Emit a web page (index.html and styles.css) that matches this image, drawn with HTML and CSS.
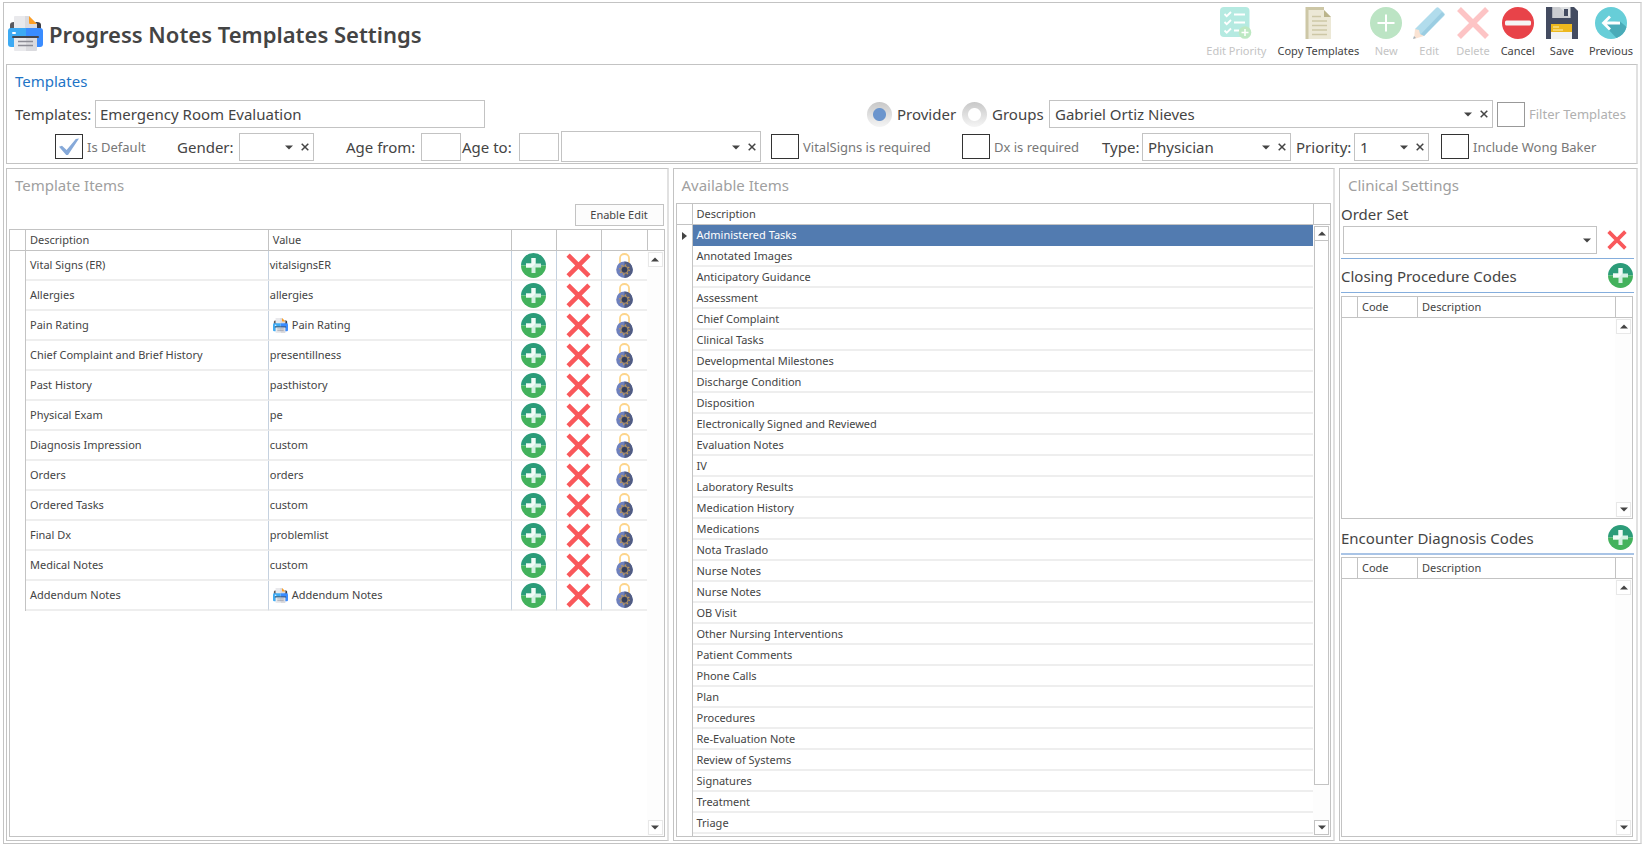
FILE: index.html
```html
<!DOCTYPE html>
<html lang="en">
<head>
<meta charset="utf-8">
<title>Progress Notes Templates Settings</title>
<link rel="stylesheet" href="styles.css">
</head>
<body>
<svg class="sprite" aria-hidden="true">
  <symbol id="printer" viewBox="0 0 35 35">
    <path d="M2 14V9q0-3 4-3h2v8z" fill="#59595f"/><path d="M27 6h2q4 0 4 3v5h-6z" fill="#3d3d45"/>
    <path d="M6 1q0-1 1-1h14v13H6z" fill="#e9e9ec"/><path d="M17 0h4l8 8v5H17z" fill="#dadade"/>
    <path d="M21 0l8 8h-7q-1 0-1-1z" fill="#ff9f24"/>
    <path d="M3 12h15v19H3q-3 0-3-3V15q0-3 3-3z" fill="#3daaf3"/><path d="M18 12h14q3 0 3 3v13q0 3-3 3H18z" fill="#3a8cff"/>
    <rect x="4" y="16" width="4" height="2" rx="1" fill="#fff"/>
    <rect x="4" y="20" width="27" height="2" rx="1" fill="#44454d"/>
    <path d="M6 22h12v13H7q-1 0-1-1z" fill="#e9e9ec"/><path d="M18 22h11v12q0 1-1 1H18z" fill="#dadade"/>
    <path d="M10 25.500h15M10 29.500h15" stroke="#8b8b94" stroke-width="1.400"/>
  </symbol>
  <symbol id="plus" viewBox="0 0 25 25">
    <path d="M0 12.500a12.500 12.500 0 0 1 25 0z" fill="#2c9c79"/><path d="M0 12.500a12.500 12.500 0 0 0 25 0z" fill="#43b25c"/>
    <path d="M10.500 5h4v5.500H20v4h-5.500V20h-4v-5.500H5v-4h5.500z" fill="#d4f0e3"/><path d="M10.500 5h4v5.500l-4 4H5v-4h5.500z" fill="#f2fbf7"/>
  </symbol>
  <symbol id="cross" viewBox="0 0 24 24">
    <path d="M2 2l20 20M22 2L2 22" stroke="#f9585b" stroke-width="4.400"/>
  </symbol>
  <symbol id="lock" viewBox="0 0 17 25">
    <path d="M4 11V5.200a4.500 4.200 0 0 1 9 0V11" fill="none" stroke="#fdd58b" stroke-width="1.800"/>
    <circle cx="8.500" cy="16.700" r="8.300" fill="#6e80bd"/><path d="M8.500 8.400a8.300 8.300 0 0 1 0 16.600z" fill="#515c82"/>
    <circle cx="8.500" cy="16.700" r="4.700" fill="none" stroke="#c79a52" stroke-width="1.600" stroke-dasharray="1.200 2.490"/>
    <circle cx="8.500" cy="16.700" r="3.700" fill="#5a6282" stroke="#c79a52" stroke-width=".8"/><circle cx="8.500" cy="16.700" r="2.600" fill="#353e59"/>
  </symbol>
  <symbol id="caret" viewBox="0 0 8 5"><path d="M0 .5h8L4 4.500z" fill="#444"/></symbol>
  <symbol id="caret-up" viewBox="0 0 8 5"><path d="M0 4.500h8L4 .5z" fill="#444"/></symbol>
  <symbol id="clear" viewBox="0 0 8 8"><path d="M.7.700l6.600 6.600M7.300.700L.7 7.300" stroke="#444" stroke-width="1.500"/></symbol>
</svg>

<div class="window">
  <header class="header">
    <h1 class="title"><svg class="title-icon"><use href="#printer"/></svg>Progress Notes Templates Settings</h1>
    <nav class="toolbar">
      <button class="tool" disabled><svg viewBox="0 0 32 32">
        <rect width="29.500" height="30" rx="4" fill="#b5eae1"/>
        <path d="M4.500 7l2.200 2.200L11 5M4.500 15l2.200 2.200L11 13M4.500 23.500l2.200 2.200L11 21.500M14 7.500h11M14 15.500h11M14 23.500h5" fill="none" stroke="#fff" stroke-width="1.800"/>
        <circle cx="25" cy="25.500" r="6.300" fill="#bde8c2"/><path d="M25 22v7M21.500 25.500h7" stroke="#fff" stroke-width="1.500"/></svg>Edit Priority</button>
      <button class="tool"><svg viewBox="0 0 32 32">
        <path d="M3.500 0H22v5H8v27H3.500z" fill="#cdc7a6"/><path d="M6.500 3H22l7 7v22H6.500z" fill="#ece8d6"/><path d="M22 3l7 7h-7z" fill="#bbb48b"/>
        <path d="M10 9.500h9M10 14h15M10 18.500h15M10 23h15M10 27.500h15" stroke="#cdc7a6" stroke-width="1.500"/></svg>Copy Templates</button>
      <button class="tool" disabled><svg viewBox="0 0 32 32"><circle cx="16" cy="16" r="16" fill="#bce4c4"/><path d="M16 7.500v17M7.500 16h17" stroke="#fff" stroke-width="2"/></svg>New</button>
      <button class="tool" disabled><svg viewBox="0 0 32 32">
        <path d="M2 22L23 1q1.500-1.500 3 0l5 5q1.500 1.500 0 3L11 29l-4-1-4-4z" fill="#b1dcec"/><path d="M7 28L29 5l2.500 2.500L11 29z" fill="#9bcde2"/>
        <path d="M2 22l4 1 1 4 4 2-10 3z" fill="#fae3d3"/><path d="M1 29l2 2-3 1z" fill="#a7b2ba"/></svg>Edit</button>
      <button class="tool" disabled><svg viewBox="0 0 32 32"><path d="M2 2l28 28M30 2L2 30" stroke="#fdc4c5" stroke-width="5.500"/></svg>Delete</button>
      <button class="tool"><svg viewBox="0 0 32 32"><circle cx="16" cy="16" r="16" fill="#e84349"/><rect x="3" y="13.500" width="26" height="5" rx="1.500" fill="#f5f5f5"/></svg>Cancel</button>
      <button class="tool"><svg viewBox="0 0 32 32">
        <path d="M0 0h28l4 4v28H0z" fill="#434b60"/><path d="M6.500 0h18v11h-18z" fill="#e0e2e4"/><path d="M6.500 0h7l11 11h-18z" fill="#cbcdd1"/><rect x="18" y="2" width="4" height="7" fill="#434b60"/>
        <path d="M5 17h21v8H5z" fill="#edb81e"/><path d="M5 25h21v7H5z" fill="#f2f2f2"/><path d="M7 20h6M7 23h10" stroke="#fff1b5"/></svg>Save</button>
      <button class="tool"><svg viewBox="0 0 32 32"><circle cx="16" cy="16" r="16" fill="#67ced8"/><path d="M8 17l13.500 14A16 16 0 0 0 31.500 20l-7-6z" fill="#4aabb8"/>
        <path d="M25 16H9M15 9.500L8.500 16l6.500 6.500" fill="none" stroke="#fff" stroke-width="2.800"/></svg>Previous</button>
    </nav>
  </header>

  <section class="panel form">
    <h2 class="panel-title active">Templates</h2>
    <div class="row">
      <label class="label w-templates" for="tpl">Templates:</label>
      <input class="box text-name" id="tpl" type="text" value="Emergency Room Evaluation">
      <label class="radio push"><input type="radio" name="owner" checked>Provider</label>
      <label class="radio"><input type="radio" name="owner">Groups</label>
      <span class="box combo provider"><select aria-label="Provider"><option>Gabriel Ortiz Nieves</option></select><svg class="caret"><use href="#caret"/></svg><button class="clear" aria-label="Clear provider"><svg><use href="#clear"/></svg></button></span>
      <label class="check off w-filter"><input type="checkbox" disabled>Filter Templates</label>
    </div>
    <div class="row second">
      <label class="check w-default"><input type="checkbox" checked>Is Default</label>
      <label class="label w-gender" for="gender">Gender:</label>
      <span class="box combo short"><select id="gender"><option></option></select><svg class="caret"><use href="#caret"/></svg><button class="clear" aria-label="Clear gender"><svg><use href="#clear"/></svg></button></span>
      <label class="label w-from" for="from">Age from:</label>
      <input class="box age" id="from" type="text">
      <label class="label w-to" for="to">Age to:</label>
      <input class="box age" id="to" type="text">
      <span class="box combo unit"><select aria-label="Age unit"><option></option></select><svg class="caret"><use href="#caret"/></svg><button class="clear" aria-label="Clear age unit"><svg><use href="#clear"/></svg></button></span>
      <label class="check w-vital"><input type="checkbox">VitalSigns is required</label>
      <label class="check w-dx"><input type="checkbox">Dx is required</label>
      <label class="label w-type" for="type">Type:</label>
      <span class="box combo type"><select id="type"><option>Physician</option></select><svg class="caret"><use href="#caret"/></svg><button class="clear" aria-label="Clear type"><svg><use href="#clear"/></svg></button></span>
      <label class="label w-priority" for="priority">Priority:</label>
      <span class="box combo short"><select id="priority"><option>1</option></select><svg class="caret"><use href="#caret"/></svg><button class="clear" aria-label="Clear priority"><svg><use href="#clear"/></svg></button></span>
      <label class="check w-wong"><input type="checkbox">Include Wong Baker</label>
    </div>
  </section>

  <main class="columns">
    <section class="panel wide">
      <h2 class="panel-title">Template Items</h2>
      <button class="enable">Enable Edit</button>
      <div class="grid">
        <div class="view">
          <table class="table items">
            <colgroup><col class="c-mark"><col><col><col class="c-act"><col class="c-act"><col class="c-act"></colgroup>
            <thead><tr><th></th><th>Description</th><th>Value</th><th></th><th></th><th></th></tr></thead>
            <tbody id="items"></tbody>
          </table>
        </div>
        <div class="side"><div class="side-head"></div><div class="scroll"><button class="arrow" aria-label="Scroll up"><svg><use href="#caret-up"/></svg></button><button class="arrow" aria-label="Scroll down"><svg><use href="#caret"/></svg></button></div></div>
      </div>
    </section>

    <section class="panel wide">
      <h2 class="panel-title">Available Items</h2>
      <div class="grid">
        <div class="view">
          <table class="table available">
            <colgroup><col class="c-mark"><col></colgroup>
            <thead><tr><th></th><th>Description</th></tr></thead>
            <tbody id="available"></tbody>
          </table>
        </div>
        <div class="side"><div class="side-head"></div><div class="scroll strong"><button class="arrow" aria-label="Scroll up"><svg><use href="#caret-up"/></svg></button><div class="track"><div class="thumb"></div></div><button class="arrow" aria-label="Scroll down"><svg><use href="#caret"/></svg></button></div></div>
      </div>
    </section>

    <section class="panel clinical">
      <h2 class="panel-title">Clinical Settings</h2>
      <label class="sub" for="order">Order Set</label>
      <div class="order">
        <span class="box combo plain"><select id="order"><option></option></select><svg class="caret"><use href="#caret"/></svg></span>
        <button class="icon" aria-label="Clear order set"><svg class="ico-x small"><use href="#cross"/></svg></button>
      </div>
      <div class="bar ruled"><h3 class="sub">Closing Procedure Codes</h3><button class="icon" aria-label="Add procedure code"><svg class="ico-plus"><use href="#plus"/></svg></button></div>
      <div class="grid codes closing">
        <div class="view"><table class="table"><colgroup><col class="c-mark"><col class="c-code"><col></colgroup><thead><tr><th></th><th>Code</th><th>Description</th></tr></thead></table></div>
        <div class="side"><div class="side-head"></div><div class="scroll"><button class="arrow" aria-label="Scroll up"><svg><use href="#caret-up"/></svg></button><button class="arrow" aria-label="Scroll down"><svg><use href="#caret"/></svg></button></div></div>
      </div>
      <div class="bar"><h3 class="sub">Encounter Diagnosis Codes</h3><button class="icon" aria-label="Add diagnosis code"><svg class="ico-plus"><use href="#plus"/></svg></button></div>
      <div class="grid codes encounter">
        <div class="view"><table class="table"><colgroup><col class="c-mark"><col class="c-code"><col></colgroup><thead><tr><th></th><th>Code</th><th>Description</th></tr></thead></table></div>
        <div class="side"><div class="side-head"></div><div class="scroll"><button class="arrow" aria-label="Scroll up"><svg><use href="#caret-up"/></svg></button><button class="arrow" aria-label="Scroll down"><svg><use href="#caret"/></svg></button></div></div>
      </div>
    </section>
  </main>
</div>
<script src="app.js"></script>
</body>
</html>
```
FILE: styles.css
```css
* { box-sizing: border-box; }
body { margin: 0; padding: 2px 4px 5px 3px; background: #fff; color: #444; font: 15px/20px "Segoe UI", "Noto Sans", "Open Sans", sans-serif; }
h1, h2, h3 { margin: 0; font-weight: 400; }
button, input, select { font: inherit; color: inherit; }
button { background: none; border: 0; padding: 0; }
svg { display: block; flex: none; }
.sprite { position: absolute; width: 0; height: 0; }

.window { display: flex; flex-direction: column; height: calc(100vh - 7px); min-height: 600px; border: 1px solid #c3c3c3; border-right: 2px solid #e1e1e1; padding: 0 2px 2px; }

.header { display: flex; justify-content: space-between; height: 61px; flex: none; }
.title { display: flex; align-items: center; gap: 6px; padding-left: 2px; font-size: 22px; line-height: 32px; font-weight: 600; }
.title-icon { width: 35px; height: 35px; }
.toolbar { display: flex; align-items: flex-start; gap: 11px; padding: 4px 5px 0 0; }
.tool { display: flex; flex-direction: column; align-items: center; gap: 3px; min-width: 32px; font-size: 11px; line-height: 18px; white-space: nowrap; }
.tool svg { width: 32px; height: 32px; }
.tool:disabled { color: #c4c4c4; }

.panel { border: 1px solid #c3c3c3; border-right: 2px solid #e1e1e1; padding: 6px 2px 3px; }
.panel-title { padding: 0 6px; font-size: 15px; line-height: 20px; color: #a0a0a0; }
.panel-title.active { color: #1e74c6; }

.form { flex: none; height: 100px; padding-bottom: 0; }
.row { display: flex; align-items: center; height: 28px; padding: 0 7px 0 6px; margin-top: 9px; white-space: nowrap; }
.second { height: 31px; margin-top: 3px; padding-left: 46px; }
.label { flex: none; }
.box { border: 1px solid #c3c3c3; background: #fff; height: 28px; min-width: 0; }
input.box { padding: 0 4px; outline: 0; }
.text-name { width: 390px; }
.age { width: 40px; }
.combo { position: relative; display: flex; align-items: center; flex: none; }
.combo select { appearance: none; flex: 1; min-width: 0; height: 100%; border: 0; background: none; padding: 0 40px 0 5px; outline: 0; }
.combo .caret { position: absolute; right: 20px; top: 11px; width: 8px; height: 5px; pointer-events: none; }
.combo .clear { position: absolute; right: 4px; top: 9px; }
.clear svg { width: 8px; height: 8px; }
.provider { width: 444px; margin-left: 6px; }
.short { width: 75px; }
.unit { flex: 1; height: 31px; margin-left: 2px; }
.combo.unit .caret { top: 13px; }
.combo.unit .clear { top: 11px; }
.type { width: 149px; }
.plain { flex: 1; }
.combo.plain .caret { right: 5px; }
.push { margin-left: auto; }
.radio, .check { display: flex; align-items: center; flex: none; }
.radio { gap: 5px; width: 95px; }
.radio + .radio { width: 81px; }
.radio input { appearance: none; flex: none; width: 25px; height: 25px; margin: 0; border-radius: 50%; background: radial-gradient(circle, #fff 6px, transparent 7px), linear-gradient(#c8c8c8, #f5f5f5); }
.radio input:checked { background: radial-gradient(circle, #6b95cd 6px, transparent 7px), linear-gradient(#c8c8c8, #f5f5f5); }
.check { gap: 4px; color: #777; font-size: 13px; }
.check input { appearance: none; position: relative; flex: none; width: 28px; height: 25px; margin: 0; border: 1px solid #333; background: #fff; }
.check input:checked::before { content: ""; position: absolute; inset: 3px; background: #86a9d9; clip-path: polygon(0 52%, 15% 46%, 38% 70%, 84% 6%, 100% 3%, 45% 100%, 36% 100%); }
.check.off { color: #b0b0b0; margin-left: 4px; }
.check.off input { border-color: #999; }
.w-templates { width: 80px; }
.w-filter { width: 130px; }
.w-default { width: 122px; }
.w-gender { width: 62px; }
.w-from { width: 75px; margin-left: 32px; }
.w-to { width: 58px; padding-left: 1px; }
.w-vital { width: 191px; margin-left: 10px; }
.w-dx { width: 140px; }
.w-type { width: 40px; }
.w-priority { width: 58px; margin-left: 5px; }
.w-wong { width: 186px; margin-left: 12px; }

.columns { display: flex; gap: 4px; flex: 1; min-height: 0; margin-top: 4px; }
.columns .panel { display: flex; flex-direction: column; min-width: 0; min-height: 0; }
.wide { flex: 1; }
.columns .clinical { width: 299px; flex: none; padding-left: 1px; }
.enable { align-self: flex-end; flex: none; width: 89px; height: 22px; border: 1px solid #c3c3c3; background: #fcfcfc; margin: 9px 1px 3px 0; font-size: 11px; line-height: 18px; }
.wide .panel-title + .grid { margin-top: 8px; }

.grid { display: flex; flex: 1; min-height: 0; border: 1px solid #c3c3c3; }
.view { flex: 1; min-width: 0; overflow: hidden; }
.side { display: flex; flex-direction: column; width: 17px; flex: none; }
.side-head { height: 21px; flex: none; border-left: 1px solid #c3c3c3; border-bottom: 1px solid #c3c3c3; }
.scroll { display: flex; flex-direction: column; justify-content: space-between; flex: 1; min-height: 0; padding: 1px; background: #fdfdfd; }
.arrow { display: flex; align-items: center; justify-content: center; flex: none; width: 15px; height: 15px; border: 1px solid #e8e8e8; background: #fff; }
.arrow svg { width: 8px; height: 5px; }
.strong .arrow { border-color: #c3c3c3; }
.track { flex: 1; min-height: 0; }
.thumb { height: 94%; border: 1px solid #c3c3c3; border-top: 0; background: #fff; }

.table { width: 100%; table-layout: fixed; border-collapse: separate; border-spacing: 0; font-size: 11px; line-height: 16px; }
.c-mark { width: 16px; }
.c-code { width: 60px; }
.c-act { width: 45px; }
.table th { height: 21px; padding: 0 4px; text-align: left; font-weight: 400; border-right: 1px solid #c3c3c3; border-bottom: 1px solid #c3c3c3; white-space: nowrap; }
.table th:last-child { border-right: 0; }
.table td { padding: 0 4px; border-bottom: 2px solid #eee; white-space: nowrap; overflow: hidden; }
.table td:first-child { padding: 0; border-right: 1px solid #c3c3c3; border-bottom: 0; }
.items td { height: 30px; border-right: 1px solid #c5d1df; }
.items td:last-child { border-right: 0; }
.items .value { padding: 0 0 0 1px; }
.items .act { padding: 0; }
.act .icon { margin: 0 auto; }
.printed { display: flex; align-items: center; gap: 4px; padding-left: 3px; }
.printed svg { width: 15px; height: 15px; }
.available td { height: 21px; }
.available td:first-child svg { width: 5px; height: 8px; margin: 0 auto; }
.available .selected td:last-child { background: #527bb0; color: #fff; border-color: #527bb0; }
.icon { display: block; }
.ico-plus { width: 25px; height: 25px; }
.ico-x { width: 25px; height: 25px; }
.ico-x.small { width: 20px; height: 20px; }
.ico-lock { width: 17px; height: 25px; }

.clinical .panel-title { padding-left: 7px; }
.sub { display: block; font-size: 15px; line-height: 20px; }
label.sub { margin: 9px 0 2px; }
.order { display: flex; align-items: center; gap: 10px; padding: 0 7px 0 2px; margin-bottom: 4px; }
.bar { display: flex; align-items: center; justify-content: space-between; flex: none; height: 36px; padding: 4px 1px 0 0; border-bottom: 2px solid #a9c4e6; margin-bottom: 2px; }
.bar.ruled { height: 35px; padding-top: 0; margin-bottom: 3px; border-top: 1px solid #85aedd; border-bottom: 1px solid #85aedd; }
.codes { margin-right: 1px; }
.closing { flex: 223; }
.encounter { flex: 281; }
```
FILE: app.js
```js
const items = [
  ["Vital Signs (ER)", "vitalsignsER"],
  ["Allergies", "allergies"],
  ["Pain Rating", "Pain Rating", true],
  ["Chief Complaint and Brief History", "presentillness"],
  ["Past History", "pasthistory"],
  ["Physical Exam", "pe"],
  ["Diagnosis Impression", "custom"],
  ["Orders", "orders"],
  ["Ordered Tasks", "custom"],
  ["Final Dx", "problemlist"],
  ["Medical Notes", "custom"],
  ["Addendum Notes", "Addendum Notes", true]
];
const available = [
  "Administered Tasks", "Annotated Images", "Anticipatory Guidance", "Assessment", "Chief Complaint",
  "Clinical Tasks", "Developmental Milestones", "Discharge Condition", "Disposition",
  "Electronically Signed and Reviewed", "Evaluation Notes", "IV", "Laboratory Results",
  "Medication History", "Medications", "Nota Traslado", "Nurse Notes", "Nurse Notes", "OB Visit",
  "Other Nursing Interventions", "Patient Comments", "Phone Calls", "Plan", "Procedures",
  "Re-Evaluation Note", "Review of Systems", "Signatures", "Treatment", "Triage", ""
];
const action = (label, cls, id) =>
  `<td class="act"><button class="icon" aria-label="${label}"><svg class="${cls}"><use href="#${id}"/></svg></button></td>`;

document.getElementById("items").innerHTML = items.map(([name, value, printed]) => `<tr><td></td><td>${name}</td>
  <td class="value">${printed ? `<span class="printed"><svg><use href="#printer"/></svg>${value}</span>` : value}</td>
  ${action("Add", "ico-plus", "plus")}${action("Remove", "ico-x", "cross")}${action("Lock", "ico-lock", "lock")}</tr>`).join("");

document.getElementById("available").innerHTML = available.map((name, i) =>
  `<tr class="${i ? "" : "selected"}"><td>${i ? "" : '<svg viewBox="0 0 5 8"><path d="M0 0l5 4-5 4z" fill="#444"/></svg>'}</td><td>${name}</td></tr>`).join("");
```
